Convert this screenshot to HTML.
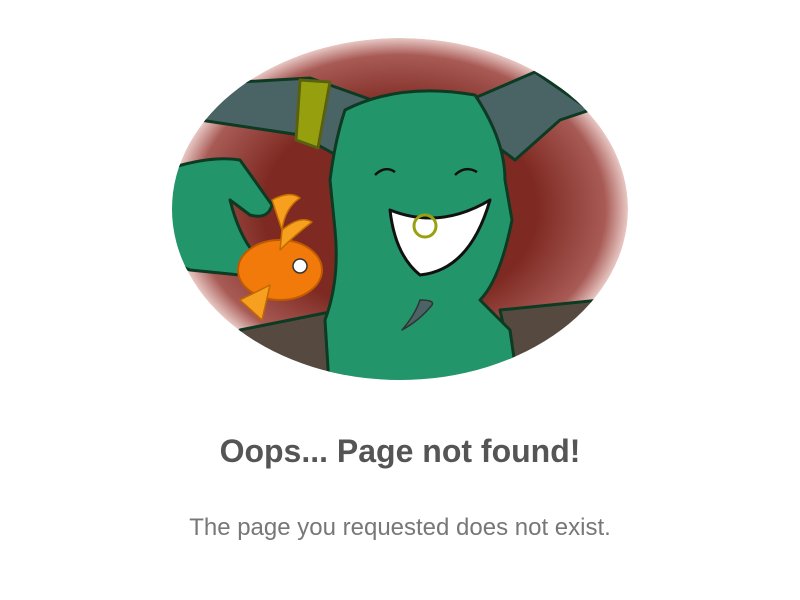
<!DOCTYPE html>
<html><head><meta charset="utf-8"><style>
html,body{margin:0;padding:0;background:#fff;width:800px;height:600px;overflow:hidden}
svg{position:absolute;left:0;top:0}
h1{position:absolute;top:431px;left:0;width:800px;margin:0;text-align:center;font:bold 32px "Liberation Sans",sans-serif;color:#555;line-height:40px}
p{position:absolute;top:513px;left:0;width:800px;margin:0;text-align:center;font:24px "Liberation Sans",sans-serif;color:#777;line-height:30px}
</style></head><body>
<svg width="800" height="400" viewBox="0 0 800 400">
<defs>
<clipPath id="c"><ellipse cx="400" cy="209" rx="228" ry="171"/></clipPath>
<radialGradient id="bg" cx="0.5" cy="0.5" r="0.5">
<stop offset="0.6" stop-color="#7e2a22"/><stop offset="0.9" stop-color="#a85a55"/><stop offset="1" stop-color="#e8c8c4"/></radialGradient>
</defs>
<g clip-path="url(#c)" stroke="#0d3a22" stroke-width="3" stroke-linejoin="round">
<ellipse cx="400" cy="209" rx="228" ry="171" fill="url(#bg)" stroke="none"/>
<path d="M165 118 L240 82 L310 78 L372 100 L345 160 L300 135 L200 120 Z" fill="#4a6466"/>
<path d="M300 80 L330 82 L318 148 L296 140 Z" fill="#96a00e" stroke="#5a6010"/>
<path d="M470 100 L535 72 L590 110 L560 120 L515 160 L475 130 Z" fill="#4a6466"/>
<path d="M240 330 L340 310 L345 400 L240 400 Z" fill="#564a40"/>
<path d="M500 310 L600 300 L620 400 L520 400 Z" fill="#564a40"/>
<path d="M345 110 Q400 82 475 95 Q505 140 505 180 L512 220 Q500 280 480 300 L510 330 L520 400 L330 400 L325 320 Q340 280 335 230 L330 180 Q335 140 345 110 Z" fill="#22966a"/>
<path d="M165 170 Q210 155 240 160 L272 205 Q268 220 250 215 L230 200 Q240 240 260 260 L240 275 L190 270 L165 260 Z" fill="#22966a"/>
<path d="M375 175 Q385 165 395 172" fill="none" stroke="#111" stroke-width="2.5"/>
<path d="M455 175 Q465 165 477 172" fill="none" stroke="#111" stroke-width="2.5"/>
<path d="M390 210 Q440 230 490 200 Q470 270 420 275 Q395 255 390 210 Z" fill="#fff" stroke="#111"/>
<circle cx="425" cy="226" r="11" fill="none" stroke="#9aa010" stroke-width="3"/>
<ellipse cx="280" cy="270" rx="42" ry="30" fill="#f27a0a" stroke="#c05a00" stroke-width="2"/>
<circle cx="300" cy="266" r="7" fill="#fff" stroke="#333" stroke-width="1.5"/>
<path d="M272 200 Q290 190 300 198 Q285 208 282 230 Z" fill="#f7a020" stroke="#c06a00" stroke-width="1.5"/>
<path d="M282 230 Q300 215 312 222 Q295 235 280 250 Z" fill="#f7a020" stroke="#c06a00" stroke-width="1.5"/>
<path d="M240 300 L270 285 L262 320 Z" fill="#f7a020" stroke="#c06a00" stroke-width="1.5"/>
<path d="M420 300 Q435 300 432 305 Q420 320 402 330 Q415 315 420 300 Z" fill="#4a6466" stroke="#333" stroke-width="1.5"/>
</g>
</svg>
<h1>Oops... Page not found!</h1>
<p>The page you requested does not exist.</p>
</body></html>
